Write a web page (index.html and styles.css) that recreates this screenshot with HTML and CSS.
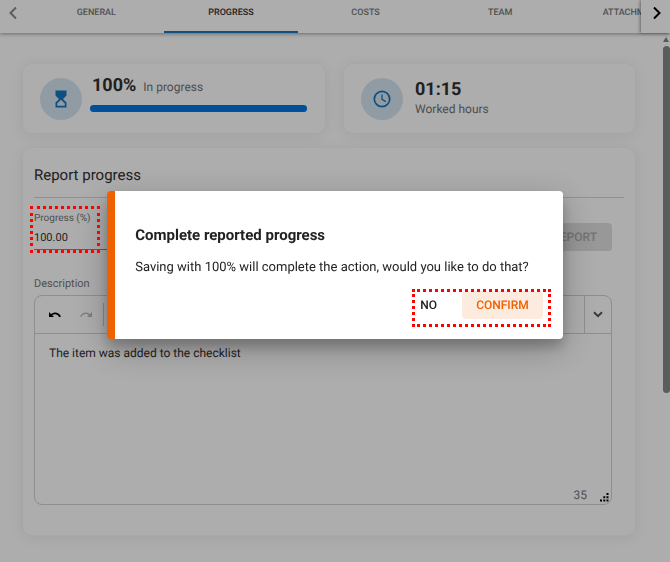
FILE: index.html
```
<!DOCTYPE html>
<html lang="en">

<head>
    <meta charset="UTF-8">
    <meta name="viewport" content="width=device-width, initial-scale=1.0">
    <title>Report progress</title>
    <link rel="stylesheet" href="styles.css">
</head>

<body>
    <header class="tab-header">
        <button class="pager pager-prev" aria-label="Previous tabs" disabled>
            <svg width="8" height="14" viewBox="0 0 8 14"><path d="M7 1.5L1.5 7L7 12.5"/></svg>
        </button>
        <nav class="tabs">
            <a class="tab" href="#general">GENERAL</a>
            <a class="tab active" href="#progress">PROGRESS</a>
            <a class="tab" href="#costs">COSTS</a>
            <a class="tab" href="#team">TEAM</a>
            <a class="tab" href="#attachments">ATTACHMENTS</a>
        </nav>
        <button class="pager pager-next" aria-label="Next tabs">
            <svg width="8" height="14" viewBox="0 0 8 14"><path d="M1 1.5L6.5 7L1 12.5"/></svg>
        </button>
    </header>

    <div class="page">
        <main class="content">
            <div class="summary">
                <section class="card summary-card">
                    <div class="badge">
                        <svg width="12" height="18" viewBox="0 0 12 18">
                            <path fill="currentColor" fill-rule="evenodd" d="M0.5 0.5H11.5V5.5L8 9L11.5 12.5V17.5H0.5V12.5L4 9L0.5 5.5ZM6 9.8L2.2 13.4V15.8H9.8V13.4Z"/>
                        </svg>
                    </div>
                    <div class="summary-body">
                        <div class="summary-line">
                            <strong class="figure">100%</strong>
                            <span class="caption">In progress</span>
                        </div>
                        <div class="bar" role="progressbar" aria-valuenow="100" aria-valuemin="0" aria-valuemax="100" aria-label="Progress">
                            <div class="bar-fill" style="width: 100%"></div>
                        </div>
                    </div>
                </section>
                <section class="card summary-card">
                    <div class="badge">
                        <svg width="18" height="18" viewBox="0 0 18 18" fill="none" stroke="currentColor">
                            <circle cx="9" cy="9" r="7.7" stroke-width="1.7"/>
                            <path d="M9 4.5V9.3L12.8 11.6" stroke-width="1.3"/>
                        </svg>
                    </div>
                    <div class="hours">
                        <strong class="figure">01:15</strong>
                        <span class="caption">Worked hours</span>
                    </div>
                </section>
            </div>

            <section class="card report">
                <h1>Report progress</h1>
                <form class="report-form">
                    <div class="form-row">
                        <div class="field">
                            <label for="progress">Progress (%)</label>
                            <input type="text" id="progress" value="100.00">
                        </div>
                        <button type="button" class="report-button" disabled>REPORT</button>
                    </div>
                    <label class="description-label" for="description">Description</label>
                    <div class="editor">
                        <div class="toolbar">
                            <button type="button" class="tool" aria-label="Undo">
                                <svg width="12" height="8" viewBox="0 0 12 8"><path d="M0 1L2 3C5.5 0.2 10 1.2 12 5.6L10.3 6.2C8.8 3 5.5 2.4 3.3 4.3L5 6H0Z"/></svg>
                            </button>
                            <button type="button" class="tool" aria-label="Redo" disabled>
                                <svg width="12" height="8" viewBox="0 0 12 8"><path d="M12 1L10 3C6.5 0.2 2 1.2 0 5.6L1.2 6C3 2.5 6.5 2 8.7 4.3L7 6H12Z"/></svg>
                            </button>
                            <span class="separator"></span>
                            <button type="button" class="more" aria-label="More tools">
                                <svg width="10" height="7" viewBox="0 0 10 7"><path d="M1 1.2L5 5.2L9 1.2"/></svg>
                            </button>
                        </div>
                        <textarea id="description">The item was added to the checklist</textarea>
                        <div class="editor-footer">
                            <span>35</span>
                            <svg width="9" height="9" viewBox="0 0 9 9">
                                <path d="M6.5 0H8.5V2H6.5ZM6.5 3.3H8.5V5.3H6.5ZM6.5 6.6H8.5V8.6H6.5ZM3.3 3.3H5.3V5.3H3.3ZM3.3 6.6H5.3V8.6H3.3ZM0 6.6H2V8.6H0Z"/>
                            </svg>
                        </div>
                    </div>
                </form>
            </section>
        </main>
        <div class="scrollbar">
            <span class="scroll-arrow"></span>
            <span class="scroll-thumb"></span>
        </div>
    </div>

    <div class="overlay">
        <div class="dialog" role="dialog" aria-modal="true" aria-labelledby="dialog-title">
            <h2 id="dialog-title">Complete reported progress</h2>
            <p>Saving with 100% will complete the action, would you like to do that?</p>
            <div class="actions">
                <button class="no">NO</button>
                <button class="confirm">CONFIRM</button>
                <span class="mark mark-actions"></span>
            </div>
        </div>
    </div>
    <span class="mark mark-field"></span>
</body>

</html>
```
FILE: styles.css
```
* {
    box-sizing: border-box;
}

body {
    margin: 0;
    height: 100vh;
    overflow: hidden;
    display: flex;
    flex-direction: column;
    background: #fff;
    color: #303030;
    font-family: Roboto, sans-serif;
    font-size: 12px;
    text-rendering: geometricPrecision;
}

button,
input,
textarea {
    font: inherit;
    color: inherit;
    text-rendering: inherit;
    border: 0;
    padding: 0;
    margin: 0;
    background: none;
}

svg {
    display: block;
}

/* tabs */
.tab-header {
    display: flex;
    height: 33px;
    flex-shrink: 0;
    box-shadow: 0 1px 4px rgba(0, 0, 0, .4);
}

.tabs {
    display: flex;
    flex: 1;
    overflow: hidden;
}

.tab {
    flex: 0 0 22%;
    padding-top: 6px;
    border-bottom: 2px solid transparent;
    color: #777;
    font-size: 9px;
    font-weight: 500;
    line-height: 14px;
    text-align: center;
    text-decoration: none;
}

.tab.active {
    color: #303030;
    border-color: #1976be;
}

.pager {
    display: flex;
    justify-content: center;
    width: 29px;
    padding-top: 6px;
}

.pager path {
    fill: none;
    stroke: #000;
    stroke-width: 2;
}

.pager-prev {
    padding-right: 3px;
}

.pager-prev path {
    stroke: #888;
}

.pager-next {
    padding-left: 3px;
    box-shadow: -1px 0 3px rgba(0, 0, 0, .4);
}

/* page */
.page {
    display: flex;
    flex: 1;
    min-height: 0;
}

.content {
    flex: 1;
    padding: 30px 26px 0 22px;
}

.card {
    border: 1px solid #f6f6f6;
    border-radius: 10px;
    box-shadow: 0 2px 14px rgba(0, 0, 0, .07);
}

.summary {
    display: grid;
    grid-template-columns: 304fr 293fr;
    gap: 17px;
    margin-bottom: 13px;
}

.summary-card {
    display: flex;
    align-items: center;
    height: 71px;
    padding: 0 18px 0 17px;
}

.badge {
    display: flex;
    align-items: center;
    justify-content: center;
    width: 42px;
    height: 42px;
    border-radius: 50%;
    background: #d4e5f2;
    color: #1976be;
}

.summary-body {
    flex: 1;
    margin-left: 8px;
}

.summary-line {
    display: flex;
    align-items: baseline;
    gap: 7px;
    padding-left: 2px;
}

.figure {
    font-size: 18px;
    font-weight: 700;
    line-height: 22px;
}

.caption {
    color: #737373;
    line-height: 16px;
}

.bar {
    height: 7px;
    margin: 8px 0 11px;
    border-radius: 4px;
    background: #ddd;
}

.bar-fill {
    height: 100%;
    border-radius: 4px;
    background: #0078e4;
}

.hours {
    display: flex;
    flex-direction: column;
    margin-left: 12px;
    padding-bottom: 2px;
}

/* report card */
.report {
    padding: 15px 11px 30px;
}

h1 {
    margin: 0;
    padding-bottom: 10px;
    border-bottom: 1px solid #d6d6d6;
    font-size: 15px;
    font-weight: 400;
    line-height: 24px;
}

.report-form {
    padding: 14px 12px 0 0;
}

.form-row {
    display: flex;
    align-items: center;
    justify-content: space-between;
    height: 50px;
}

.field {
    display: flex;
    flex-direction: column;
    align-self: flex-start;
    width: 140px;
    color: #777;
    font-size: 10px;
    line-height: 14px;
}

.field input {
    width: 100%;
    height: 24px;
    border-bottom: 1px solid #888;
    color: #303030;
    font-size: 11px;
}

.report-button {
    height: 28px;
    padding: 0 15px;
    border-radius: 4px;
    background: #e0e0e0;
    color: #aaa;
    font-weight: 500;
}

.description-label {
    display: block;
    padding: 14px 0 3px;
    color: #777;
    font-size: 11px;
    line-height: 16px;
}

.editor {
    border: 1px solid #d2d2d2;
    border-radius: 8px;
}

.toolbar {
    display: flex;
    align-items: center;
    height: 38px;
    padding-left: 4px;
    border-bottom: 1px solid #d2d2d2;
}

.tool {
    display: flex;
    align-items: center;
    justify-content: center;
    width: 31px;
    height: 28px;
}

.tool path {
    fill: #000;
}

.tool:disabled path {
    fill: #bbb;
}

.separator {
    width: 1px;
    height: 23px;
    margin-left: 2px;
    background: #ccc;
}

.more {
    display: flex;
    align-items: center;
    justify-content: center;
    width: 27px;
    height: 37px;
    margin-left: auto;
    border-left: 1px solid #d2d2d2;
}

.more path {
    fill: none;
    stroke: #555;
    stroke-width: 2;
}

.editor textarea {
    display: block;
    width: 100%;
    height: 147px;
    padding: 11px 14px;
    line-height: 16px;
    resize: none;
    outline: 0;
}

.editor-footer {
    display: flex;
    align-items: flex-end;
    justify-content: flex-end;
    gap: 13px;
    height: 23px;
    padding: 0 2px 2px 0;
    color: #777;
    line-height: 14px;
}

.editor-footer path {
    fill: #000;
}

/* scrollbar */
.scrollbar {
    display: flex;
    flex-direction: column;
    align-items: center;
    width: 8px;
    padding-top: 4px;
}

.scroll-arrow {
    border: 3px solid transparent;
    border-top: 0;
    border-bottom: 5px solid #808080;
}

.scroll-thumb {
    width: 7px;
    height: 66%;
    margin-top: 4px;
    border-radius: 4px;
    background: #888;
}

/* dialog */
.overlay {
    position: fixed;
    inset: 0;
    display: flex;
    align-items: center;
    justify-content: center;
    padding-bottom: 32px;
    background: rgba(0, 0, 0, .32);
}

.dialog {
    width: 68%;
    padding: 32px 20px 20px;
    border-left: 8px solid #ef6000;
    border-radius: 4px;
    background: #fff;
    color: #222;
    box-shadow: 0 8px 12px rgba(0, 0, 0, .2), 0 10px 36px rgba(0, 0, 0, .25);
}

h2 {
    margin: 0 0 11px;
    font-size: 15px;
    font-weight: 700;
    line-height: 24px;
}

.dialog p {
    margin: 0 0 13px;
    font-size: 13px;
    line-height: 20px;
}

.actions {
    position: relative;
    display: flex;
    justify-content: flex-end;
    gap: 11px;
}

.actions button {
    height: 28px;
    padding: 0 14px;
    border-radius: 4px;
    font-size: 12px;
    font-weight: 500;
}

.actions .confirm {
    background: #fdebe0;
    color: #ef6000;
}

/* highlight frames */
.mark {
    position: absolute;
    border: 3px dotted #f00;
    pointer-events: none;
}

.mark-actions {
    top: -2px;
    right: -8px;
    width: 139px;
    height: 38px;
}

.mark-field {
    top: 206px;
    left: 30px;
    width: 70px;
    height: 47px;
}
```
